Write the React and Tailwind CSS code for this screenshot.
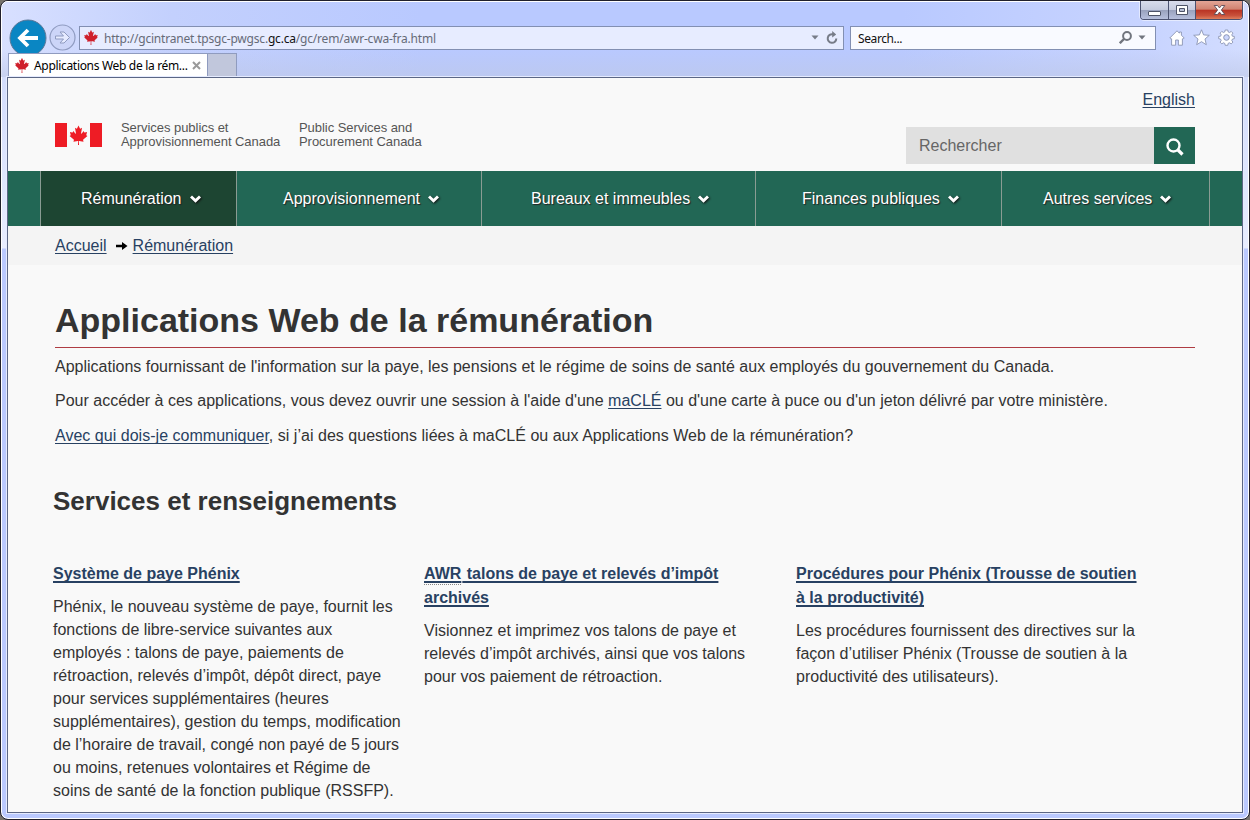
import React from "react";
import { FaCanadianMapleLeaf } from "react-icons/fa";

const link = "text-[#284162] underline decoration-1 underline-offset-[2px] [text-decoration-skip-ink:none]";
const headingLink = "w-fit text-[#284162] underline decoration-2 underline-offset-[2px] [text-decoration-skip-ink:none]";

function Chevron() {
  return (
    <svg className="mt-px h-[8px] w-[11px] drop-shadow-[1px_1px_1px_#111]" viewBox="0 0 11 8">
      <path d="M0 2.4 2 .4 5.5 3.7 9 .4 11 2.4 5.5 7.8Z" fill="#fff" />
    </svg>
  );
}

function WindowButtons() {
  return (
    <div className="ml-auto mr-[6px] flex h-[19px] w-[103px] shrink-0 overflow-hidden rounded-b-[4px] border border-t-0 border-[#4b5270] shadow-[0_0_0_1px_#ffffff80]">
      <div className="flex w-[28px] items-center justify-center border-r border-[#4b5270] bg-[linear-gradient(#d8dcec_0%,#c5cbdf_48%,#98a1bd_50%,#b6bfdc_100%)]">
        <svg width="13" height="14" viewBox="0 0 13 14"><rect x=".5" y="8.500" width="12" height="4" rx=".5" fill="#fff" stroke="#4e5468" /></svg>
      </div>
      <div className="flex w-[27px] items-center justify-center border-r border-[#4b5270] bg-[linear-gradient(#d8dcec_0%,#c5cbdf_48%,#98a1bd_50%,#b6bfdc_100%)]">
        <svg width="12" height="12" viewBox="0 0 12 12"><path d="M.5 1.5h11v9H.5Z" fill="#fff" stroke="#4e5468" /><path d="M3.5 4.5h5v3h-5Z" fill="#b9c0d6" stroke="#4e5468" /></svg>
      </div>
      <div className="flex flex-1 items-center justify-center bg-[linear-gradient(#e3a596_0%,#d08270_46%,#b93323_50%,#c8503a_80%,#de7e5c_100%)]">
        <svg width="13" height="12" viewBox="0 0 13 12"><path d="M1.2 1.5h3.3l2 2.4 2-2.4h3.3L8.4 6l3.4 4.5H8.5l-2-2.4-2 2.4H1.2L4.6 6Z" fill="#fff" stroke="#5a4a55" strokeWidth=".9" /></svg>
      </div>
    </div>
  );
}

function Toolbar() {
  return (
    <div className="flex h-[34px] items-center pl-[8px] pr-[15px]">
      <svg className="mt-[3px] shrink-0" width="38" height="38" viewBox="0 0 38 38">
        <circle cx="19" cy="19" r="18" fill="#0a86c3" stroke="#5c7796" />
        <path d="M29 19H12M19 11l-8 8 8 8" fill="none" stroke="#fff" strokeWidth="3.8" />
      </svg>
      <svg className="ml-[2px] mt-[3px] shrink-0" width="27" height="27" viewBox="0 0 27 27">
        <circle cx="13.500" cy="13.500" r="12.500" fill="#ccd5f8" stroke="#8f9bc0" strokeWidth="1.2" />
        <path d="M6.500 12h8l-3.500-4h4l5.500 5.500-5.500 5.500h-4l3.500-4h-8Z" fill="#e6ebff" stroke="#8f9bc0" />
      </svg>
      <div className="ml-[3px] mt-[3px] flex h-[24px] w-[765px] shrink-0 items-center border border-[#828fb2] bg-[#e7ecff] px-[3px]">
        <FaCanadianMapleLeaf className="h-[15px] w-[16px] text-[#cf1f2b]" />
        <div className="ml-[5px] mt-[2px] whitespace-pre text-[12px] tracking-[-0.2px] text-[#666b78]">http://gcintranet.tpsgc-pwgsc.<span className="text-[#111]">gc.ca</span>/gc/rem/awr-cwa-fra.html</div>
        <svg className="ml-auto mr-[7px]" width="8" height="5" viewBox="0 0 8 5"><path d="M.5.5h7L4 4.500Z" fill="#777c88" /></svg>
        <svg className="mr-[2px]" width="12" height="13" viewBox="0 0 12 13"><path d="M10.300 7.500A4.300 4.300 0 1 1 7 3.300" fill="none" stroke="#777c88" strokeWidth="2" /><path d="M6.200 0 10.200 3.400 6.200 6.400Z" fill="#777c88" /></svg>
      </div>
      <div className="ml-[6px] mt-[3px] flex h-[24px] w-[306px] shrink-0 items-center border border-[#828fb2] bg-[#f9faff] pl-[7px] pr-[9px]">
        <div className="mt-[2px] text-[12px] tracking-[-0.4px] text-[#111]">Search...</div>
        <svg className="ml-auto" width="13" height="13" viewBox="0 0 13 13"><circle cx="8" cy="5" r="3.900" fill="none" stroke="#71757e" strokeWidth="2" /><path d="M5 8 .8 12.200" stroke="#71757e" strokeWidth="2.400" /></svg>
        <svg className="ml-[6px]" width="8" height="5" viewBox="0 0 8 5"><path d="M.5.500h7L4 4.500Z" fill="#71757e" /></svg>
      </div>
      <svg className="ml-[13px] mt-[3px] shrink-0" width="16" height="16" viewBox="0 0 16 16"><path d="M8 .8 .8 8l1.200 1.200.6-.4v6.400h4V10h2.800v5.200h4V8.800l.6.4L15.200 8 12.400 5.200V2h-2v1.200Z" fill="#fff" stroke="#8b95b3" strokeWidth=".9" /></svg>
      <svg className="ml-[8px] mt-[3px] shrink-0" width="17" height="17" viewBox="0 0 17 17"><path d="m8.500.8 2.100 5.100 5.700.4-4.300 3.700 1.300 5.700-4.800-3-4.800 3L5 10 .7 6.300l5.700-.4Z" fill="#fff" stroke="#8b95b3" strokeWidth=".9" /></svg>
      <svg className="ml-[8px] mt-[3px] shrink-0" width="17" height="17" viewBox="0 0 17 17">
        <path d="M7.200 1h2.600l.3 1.900 1.500.6 1.600-1.100 1.700 1.700-1.100 1.700.6 1.400 1.900.2v2.300l-1.900.4-.6 1.500 1.100 1.500-1.700 1.800-1.600-1.100-1.500.6-.3 1.900H7.200l-.4-1.900-1.400-.6-1.600 1.100-1.700-1.800 1.100-1.500-.6-1.500L.7 9.700V7.400l1.900-.2.600-1.400-1.100-1.700 1.700-1.700 1.600 1.100 1.400-.6Z" fill="#fff" stroke="#8b95b3" strokeWidth=".9" />
        <circle cx="8.500" cy="8.500" r="2.800" fill="#ccd7fd" stroke="#8b95b3" />
      </svg>
    </div>
  );
}

function Tabs() {
  return (
    <div className="relative flex h-[24px] pl-[7px]">
      <div className="flex h-[23px] w-[200px] items-center border border-b-0 border-[#8f9bbf] bg-white pl-[5px]">
        <FaCanadianMapleLeaf className="h-[15px] w-[16px] shrink-0 text-[#cf1f2b]" />
        <div className="ml-[4px] mt-[2px] whitespace-nowrap text-[12px] tracking-[-0.32px] text-black">Applications Web de la rém...</div>
        <svg className="ml-auto mr-[6px] shrink-0" width="9" height="9" viewBox="0 0 9 9"><path d="m1 1 7 7M8 1 1 8" stroke="#9a9a9a" strokeWidth="2" /></svg>
      </div>
      <div className="-ml-px h-[23px] w-[30px] border border-b-0 border-[#8f9bbf] bg-[#c1c7dc]" />
    </div>
  );
}

function SiteHeader() {
  return (
    <header className="flex h-[93px] justify-between pl-[47px] pr-[47px]">
      <div className="mt-[43px] flex">
        <svg className="mt-[2px]" width="47" height="24" viewBox="0 0 47 24"><path d="M0 0h12v24H0ZM35 0h12v24H35Z" fill="#ee1c25" /><path transform="translate(3.29 .5) scale(.86 .94)" d="m23.500 2 1.700 3.200c.3.400.6.300.9.200l1.500-.8-1.100 5.500c-.2.800.4.900.7.500l2.400-2.500.6 1.200c.2.300.4.300.7.200l2.600-.5-.9 3c-.1.400-.1.600.3.800l1 .5-4.800 3.800c-.3.300-.3.400-.2.800l.5 1.400-5-.8c-.4 0-.5.100-.5.500l.2 4h-1.200l.2-4c0-.4-.1-.5-.5-.5l-5 .8.5-1.400c.1-.4.1-.5-.2-.8l-4.800-3.800 1-.5c.4-.2.400-.4.300-.8l-.9-3 2.600.5c.3.100.5.100.7-.2l.6-1.200 2.400 2.500c.3.400.9.300.7-.5l-1.100-5.500 1.500.8c.3.100.6.200.9-.2Z" fill="#ee1c25" /></svg>
        <div className="ml-[19px] w-[178px] whitespace-nowrap text-[13px] leading-[14px] tracking-[-0.05px] text-[#555]">Services publics et<br />Approvisionnement Canada</div>
        <div className="whitespace-nowrap text-[13px] leading-[14px] tracking-[-0.05px] text-[#555]">Public Services and<br />Procurement Canada</div>
      </div>
      <div className="flex w-[289px] flex-col items-end">
        <a className={`${link} mt-[10px] text-[16px] leading-[23px]`}>English</a>
        <div className="mt-[16px] flex h-[37px] w-full">
          <div className="flex flex-1 items-center bg-[#e0e0e0] pl-[13px] text-[16px] text-[#666]">Rechercher</div>
          <div className="flex w-[41px] items-center justify-center bg-[#226755]">
            <svg className="mt-[2px]" width="18" height="18" viewBox="0 0 18 18"><circle cx="7.500" cy="7.500" r="6" fill="none" stroke="#fff" strokeWidth="2.400" /><path d="m12 12 4.500 4.500" stroke="#fff" strokeWidth="3.200" /></svg>
          </div>
        </div>
      </div>
    </header>
  );
}

const menu = [
  ["Rémunération", "w-[196px] bg-[#1d4532] pl-[40px]"],
  ["Approvisionnement", "w-[245px] pl-[46px]"],
  ["Bureaux et immeubles", "w-[274px] pl-[49px]"],
  ["Finances publiques", "w-[246px] pl-[46px]"],
  ["Autres services", "w-[208px] pl-[41px]"],
];

const services = [
  {
    title: ["Système de paye Phénix"],
    text: ["Phénix, le nouveau système de paye, fournit les", "fonctions de libre-service suivantes aux", "employés : talons de paye, paiements de", "rétroaction, relevés d’impôt, dépôt direct, paye", "pour services supplémentaires (heures", "supplémentaires), gestion du temps, modification", "de l’horaire de travail, congé non payé de 5 jours", "ou moins, retenues volontaires et Régime de", "soins de santé de la fonction publique (RSSFP)."],
  },
  {
    abbr: "AWR",
    title: [" talons de paye et relevés d’impôt", "archivés"],
    text: ["Visionnez et imprimez vos talons de paye et", "relevés d’impôt archivés, ainsi que vos talons", "pour vos paiement de rétroaction."],
  },
  {
    title: ["Procédures pour Phénix (Trousse de soutien", "à la productivité)"],
    text: ["Les procédures fournissent des directives sur la", "façon d’utiliser Phénix (Trousse de soutien à la", "productivité des utilisateurs)."],
  },
];

export default function App() {
  return (
    <div className="h-[820px] w-[1250px] overflow-hidden bg-[#77736c]">
      <div className="flex h-[820px] w-[1250px] flex-col overflow-hidden rounded-[8px] border border-[#20202c] bg-[linear-gradient(#c9d4fb_0px,#d5defd_90px,#e8edff_247px,#bac9ff_248px,#bac9ff_100%)] font-['Liberation_Sans',Arial,sans-serif] shadow-[inset_0_0_0_1px_#fff]">
        <div className="m-px mb-0 flex h-[75px] flex-col rounded-t-[6px] bg-[linear-gradient(90deg,#d8e0ff_0px,#c3d0fd_170px,#b9c9ff_420px,#b9c9ff_900px,#c8d4ff_1150px,#d3ddff_100%)] font-['Noto_Sans','Open_Sans',sans-serif]">
          <div className="-mx-px -mt-px flex h-[76px] shrink-0 flex-col bg-[linear-gradient(#bbc3d800_0px,#bbc3d800_48px,#bec8e8a0_76px)] shadow-[inset_0_1px_0_#fff]">
            <div className="flex h-[18px]"><WindowButtons /></div>
            <Toolbar />
            <Tabs />
          </div>
        </div>
        <div className="mx-[6px] mb-[6px] flex min-h-0 flex-1 flex-col overflow-hidden border border-[#5b6685] bg-[#f9f9f9] text-[#333] outline outline-[#e5ebff]">
          <SiteHeader />
          <nav className="flex h-[55px] shrink-0 bg-[#226755] pl-[32px]">
            <div className="w-px bg-[#8a9c93]" />
            {menu.map(([label, cls]) => (
              <div key={label} className={`${cls} flex items-center gap-[8px] whitespace-nowrap border-r border-[#8a9c93] text-[16px] text-white [text-shadow:1px_1px_1px_#222]`}>
                <span>{label}</span><Chevron />
              </div>
            ))}
          </nav>
          <div className="flex h-[39px] shrink-0 items-center bg-[#f4f4f4] pl-[47px] text-[16px] leading-[23px]">
            <a className={link}>Accueil</a>
            <svg className="ml-[9px] mr-[5px]" width="12" height="8" viewBox="0 0 12 8"><path d="M0 2.700h6V0l5.500 4L6 8V5.300H0Z" fill="#000" /></svg>
            <a className={link}>Rémunération</a>
          </div>
          <main className="whitespace-nowrap px-[47px] text-[16px] leading-[23px]">
            <h1 className="h-[83px] border-b border-[#af3c43] pt-[34px] text-[34px] font-bold leading-[42px]">Applications Web de la rémunération</h1>
            <p className="mt-[7px]">Applications fournissant de l'information sur la paye, les pensions et le régime de soins de santé aux employés du gouvernement du Canada.</p>
            <p className="mt-[11px]">Pour accéder à ces applications, vous devez ouvrir une session à l'aide d'une <a className={link}>maCLÉ</a> ou d'une carte à puce ou d'un jeton délivré par votre ministère.</p>
            <p className="mt-[12px] tracking-[0.025px]"><a className={link}>Avec qui dois-je communiquer</a>, si j’ai des questions liées à maCLÉ ou aux Applications Web de la rémunération?</p>
            <h2 className="-ml-[2px] mt-[38px] text-[26px] font-bold leading-[32px]">Services et renseignements</h2>
            <div className="-ml-[2px] mt-[45px] grid grid-cols-[371px_372px_1fr]">
              {services.map((s) => (
                <section key={s.title[0]}>
                  <h3 className="font-bold leading-[24px]">
                    {s.title.map((t, i) => (
                      <a key={t} className={`${headingLink} block whitespace-pre`}>
                        {i === 0 && s.abbr ? <abbr className="mr-px inline-block h-[23px] border-b border-dotted border-[#888] align-top leading-[24px] underline decoration-2 underline-offset-[2px]">{s.abbr}</abbr> : null}{t}
                      </a>
                    ))}
                  </h3>
                  <p className="mt-[9px]">{s.text.map((t) => <span key={t} className="block">{t}</span>)}</p>
                </section>
              ))}
            </div>
          </main>
        </div>
      </div>
    </div>
  );
}
